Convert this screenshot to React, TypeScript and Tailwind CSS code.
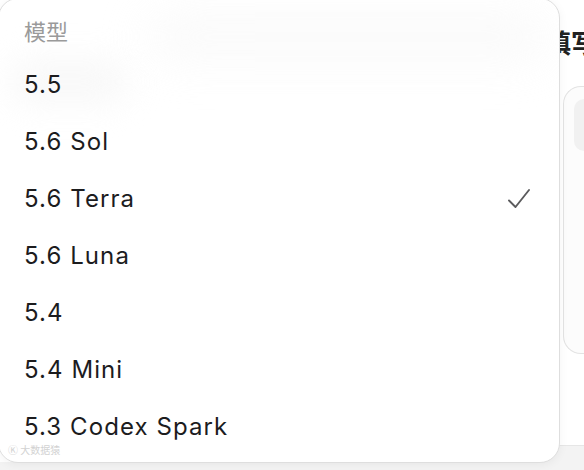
import React from 'react';

const models = ['5.5', '5.6 Sol', '5.6 Terra', '5.6 Luna', '5.4', '5.4 Mini', '5.3 Codex Spark'];
const selected = '5.6 Terra';

const CheckIcon = () => (
  <svg width="24" height="24" viewBox="0 0 24 24" fill="none">
    <path d="M2 13.5 L8.5 20 L22 3" stroke="#5b5b5d" strokeWidth="1.9" strokeLinecap="round" strokeLinejoin="round" />
  </svg>
);

export default function App() {
  return (
    <div className="relative w-[584px] h-[470px] overflow-hidden bg-white font-['Inter','Noto_Sans_CJK_SC',sans-serif]">
      {/* page behind the menu */}
      <div className="flex flex-col h-full pl-[545px]">
        <div className="pt-[29px] h-[86px] text-[26px] font-bold text-[#222] whitespace-nowrap leading-none font-['Noto_Sans_CJK_SC',sans-serif]">
          填写
        </div>
        <div className="ml-[18px] h-[268px] rounded-l-[18px] border border-r-0 border-[#e3e3e3] bg-[#fcfcfc] pt-[12px] pl-[10px]">
          <div className="h-[52px] rounded-l-[14px] bg-[#f1f1f1]" />
        </div>
        <div className="flex-1" />
        <div className="h-[25px] border-t border-[#e6e6e6] bg-[#f3f3f3]" />
      </div>
      <div className="absolute left-0 right-0 bottom-0 h-[8px] bg-[#f3f3f3]" />

      {/* dropdown menu */}
      <div className="absolute left-[-2px] top-[-2px] w-[562px] h-[465px] rounded-[20px] border border-[#dedede] bg-white shadow-[0_2px_10px_rgba(0,0,0,0.05)] overflow-hidden">
        <div className="absolute left-[150px] top-[18px] w-[400px] h-[40px] rounded-full bg-[#f5f5f5] blur-xl opacity-60" />
        <div className="absolute left-[10px] top-[60px] w-[120px] h-[45px] rounded-full bg-[#f4f4f4] blur-lg opacity-60" />
        <div className="relative pt-[6px] pl-[25px] pr-[28px]">
          <div className="h-[51px] flex items-center text-[22px] text-[#9a9a9a] font-['Noto_Sans_CJK_SC',sans-serif]">
            模型
          </div>
          {models.map(m => (
            <div key={m} className="h-[57px] flex items-center justify-between text-[24px] leading-[24px] tracking-[0.045em] text-[#1c1c1e]">
              <span>{m}</span>
              {m === selected && <CheckIcon />}
            </div>
          ))}
        </div>
        <div className="absolute left-[9px] top-[446px] text-[10px] leading-[10px] text-[#d2d2d2] font-['Noto_Sans_CJK_SC',sans-serif]">
          Ⓚ 大数据猿
        </div>
      </div>
    </div>
  );
}
